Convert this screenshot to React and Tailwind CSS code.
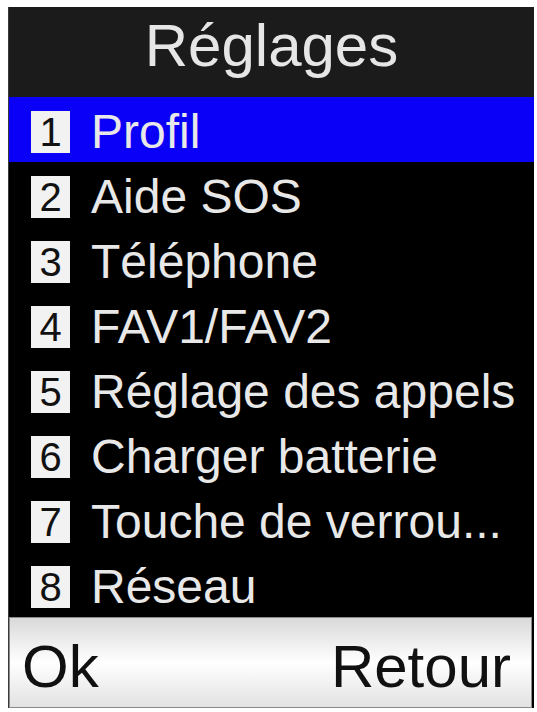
import React from 'react';

const items = [
  'Profil',
  'Aide SOS',
  'Téléphone',
  'FAV1/FAV2',
  'Réglage des appels',
  'Charger batterie',
  'Touche de verrou...',
  'Réseau',
];

const font = { fontFamily: '"Liberation Sans", Arial, sans-serif' };

export default function App() {
  const selected = 0;

  return (
    <div className="w-[537px] h-[712px] bg-white pt-[7px] pl-2 pr-[3px] pb-1 overflow-hidden" style={font}>
      <div className="h-full flex flex-col bg-black border-l border-[#3a3a3a]">
        <div className="h-[90px] shrink-0 bg-[#1b1b1b] pt-[9px] text-center">
          <span className="text-[60px] leading-none text-[#e6e6e6]">Réglages</span>
        </div>

        <ul>
          {items.map((label, i) => (
            <li
              key={label}
              className={
                i === selected
                  ? 'h-[65px] flex items-center pt-1 pl-[22px] bg-[#0a00f8]'
                  : 'h-[65px] flex items-center pt-1 pl-[22px]'
              }
            >
              <span className="w-[39px] h-[42px] shrink-0 flex items-center justify-center bg-[#f2f2f2] text-[#111] text-[40px] leading-none">
                {i + 1}
              </span>
              <span className="ml-[21px] text-[48px] leading-none text-[#e8e8e8] whitespace-nowrap">
                {label}
              </span>
            </li>
          ))}
        </ul>

        <div className="flex-1 flex items-center justify-between pt-2 pl-3 pr-5 mr-[2px] border border-[#8a8a8a] bg-gradient-to-b from-[#d9d9d9] via-white to-[#e2e2e2] text-[60px] leading-none text-[#111]">
          <span>Ok</span>
          <span>Retour</span>
        </div>
      </div>
    </div>
  );
}
